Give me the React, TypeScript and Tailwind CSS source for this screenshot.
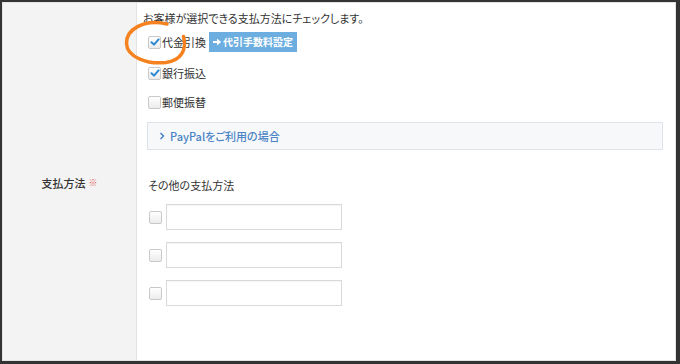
import React from 'react';

const font = { fontFamily: '"Noto Sans CJK JP", "Noto Sans", sans-serif' };

function Check({ checked }: { checked?: boolean }) {
  return (
    <span className="relative inline-flex w-[13px] h-[13px] shrink-0 items-center justify-center rounded-[2px] border border-[#c9c9c9] bg-gradient-to-b from-white to-[#ececec]">
      {checked && (
        <svg width="10" height="10" viewBox="0 0 10 10">
          <path d="M1.5 5.2 L4 7.6 L8.6 2.4" stroke="#2a88d2" strokeWidth="2" fill="none" strokeLinecap="round" strokeLinejoin="round" />
        </svg>
      )}
    </span>
  );
}

export default function App() {
  return (
    <div
      className="w-[680px] h-[364px] bg-[#333] pl-[2px] pt-[2px] pr-[4px] pb-[3px] text-[#333] text-[11px] leading-[16px] [font-feature-settings:'palt']"
      style={font}
    >
      <div className="h-full flex border border-[#e3e3e3] bg-white">
        {/* Label column */}
        <div className="w-[134px] shrink-0 bg-[#f3f3f3] border-r border-[#e3e3e3] flex items-center justify-center pt-[3px]">
          <span className="font-medium">支払方法</span>
          <span className="ml-[3px] text-[9px] text-[#e25b5b]">※</span>
        </div>

        {/* Content column */}
        <div className="relative flex-1 pl-[6px] pt-[7px]">
          <p>お客様が選択できる支払方法にチェックします。</p>

          <div className="mt-[6px] ml-[5px] flex h-[20px] items-center">
            <Check checked />
            <span className="ml-px text-[11px]">代金引換</span>
            <button className="ml-[3px] flex h-[20px] items-center bg-[#6caee0] pl-[3px] pr-[4px] text-[10px] font-bold text-white">
              <svg width="10" height="10" viewBox="0 0 10 10" className="mr-px">
                <path d="M1 4 H5 V1.5 L9.2 5 L5 8.5 V6 H1 Z" fill="white" />
              </svg>
              代引手数料設定
            </button>
          </div>

          <div className="mt-[11px] ml-[5px] flex h-[20px] items-center">
            <Check checked />
            <span className="ml-px text-[11px]">銀行振込</span>
          </div>

          <div className="mt-[9px] ml-[5px] flex h-[20px] items-center">
            <Check />
            <span className="ml-px text-[11px]">郵便振替</span>
          </div>

          <div className="mt-[10px] ml-[4px] flex h-[28px] w-[516px] items-center border border-[#dbe2ea] bg-[#f7f8f9] pl-[11px] text-[#4a84c6]">
            <svg width="6" height="8" viewBox="0 0 6 8" className="mr-[5px]">
              <path d="M1.5 1 L4.5 4 L1.5 7" stroke="#4a84c6" strokeWidth="1.5" fill="none" />
            </svg>
            <span className="font-medium">PayPalをご利用の場合</span>
          </div>

          <p className="mt-[27px] ml-[5px]">その他の支払方法</p>

          <div className="mt-[11px] ml-[6px] flex flex-col gap-[12px]">
            {[0, 1, 2].map((i) => (
              <div key={i} className="flex items-center gap-[4px]">
                <Check />
                <input className="h-[26px] w-[176px] border border-[#d9d9d9] bg-white shadow-[inset_0_1px_1px_rgba(0,0,0,0.04)] outline-none" />
              </div>
            ))}
          </div>

          {/* Annotation circle */}
          <svg className="absolute left-[-17px] top-[12px]" width="72" height="58" viewBox="120 15 72 58">
            <path
              d="M167 24 C143 18.5, 126 30, 126.5 43.5 C127 57, 147 64.5, 166 62.5 C181 60.5, 187 50, 183.5 36.5"
              stroke="#f5821f"
              strokeWidth="3.5"
              fill="none"
              strokeLinecap="round"
            />
          </svg>
        </div>
      </div>
    </div>
  );
}
